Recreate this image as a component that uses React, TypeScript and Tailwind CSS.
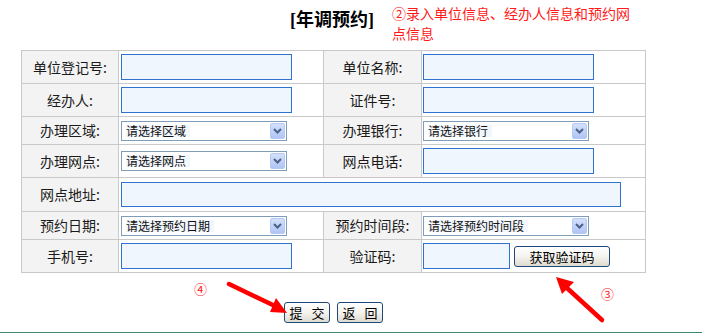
import React from "react";

const FONT = '"Noto Sans CJK SC", "Noto Sans", sans-serif';

function Label({ text }: { text: string }) {
  return (
    <div className="bg-[#f3f3f3] flex items-center justify-center text-[14px] text-[#1a1a1a]">
      {text}:
    </div>
  );
}

function Input({ w = 171, h = 26 }: { w?: number; h?: number }) {
  return (
    <div
      className="border border-[#2f72cf] bg-[#f0f6fd]"
      style={{ width: w, height: h }}
    />
  );
}

function Sel({ text }: { text: string }) {
  return (
    <div className="w-[166px] h-[20px] border border-[#7f9db9] bg-white flex items-center justify-between pl-[4px] pr-[1px]">
      <span className="text-[12px] leading-none text-[#111] bg-[#f2f7fd] pr-[4px]">{text}</span>
      <div className="w-[15px] h-[16px] rounded-[2px] border border-[#b6c9f2] bg-gradient-to-b from-[#d3e0fc] to-[#b0c5f5] flex items-center justify-center">
        <svg width="9" height="6" viewBox="0 0 9 6">
          <polyline points="1,1 4.5,4.5 8,1" fill="none" stroke="#4d6185" strokeWidth="2" />
        </svg>
      </div>
    </div>
  );
}

function XPButton({ children, w, h = 21 }: { children: React.ReactNode; w: number; h?: number }) {
  return (
    <div
      className="border border-[#1d4a7a] rounded-[3px] bg-gradient-to-b from-[#ffffff] via-[#f4f3ee] to-[#dedbd0] flex items-center justify-center text-[13px] text-black leading-none"
      style={{ width: w, height: h }}
    >
      {children}
    </div>
  );
}

function Cell({ children, pl = 2 }: { children?: React.ReactNode; pl?: number }) {
  return (
    <div className="bg-white flex items-center" style={{ paddingLeft: pl }}>
      {children}
    </div>
  );
}

export default function App() {
  return (
    <div
      className="relative w-[702px] h-[333px] bg-white border-b border-[#3b8b6b] overflow-hidden"
      style={{ fontFamily: FONT }}
    >
      {/* header */}
      <div className="h-[50px] flex items-start">
        <div className="ml-[290px] mt-[6px] text-[18px] leading-[24px] font-bold text-black">
          <span style={{ fontFamily: '"Liberation Serif", serif' }}>[</span>
          年调预约
          <span style={{ fontFamily: '"Liberation Serif", serif' }}>]</span>
        </div>
        <div className="ml-[18px] mt-[3px] w-[240px] text-[14px] leading-[20px] text-[#ff1a1a]">
          ②录入单位信息、经办人信息和预约网点信息
        </div>
      </div>

      {/* form table */}
      <div
        className="ml-[21px] w-[625px] bg-[#c9c9c9] p-px grid gap-px"
        style={{
          gridTemplateColumns: "96px 204px 97px 223px",
          gridTemplateRows: "32px 32px 27px 32px 33px 27px 32px",
        }}
      >
        <Label text="单位登记号" />
        <Cell><Input /></Cell>
        <Label text="单位名称" />
        <Cell pl={1}><Input /></Cell>

        <Label text="经办人" />
        <Cell><Input /></Cell>
        <Label text="证件号" />
        <Cell pl={1}><Input /></Cell>

        <Label text="办理区域" />
        <Cell><Sel text="请选择区域" /></Cell>
        <Label text="办理银行" />
        <Cell pl={1}><Sel text="请选择银行" /></Cell>

        <Label text="办理网点" />
        <Cell><Sel text="请选择网点" /></Cell>
        <Label text="网点电话" />
        <Cell pl={1}><Input /></Cell>

        <Label text="网点地址" />
        <div className="col-span-3 bg-white flex items-center pl-[2px]">
          <Input w={500} h={25} />
        </div>

        <Label text="预约日期" />
        <Cell><Sel text="请选择预约日期" /></Cell>
        <Label text="预约时间段" />
        <Cell pl={1}><Sel text="请选择预约时间段" /></Cell>

        <Label text="手机号" />
        <Cell><Input /></Cell>
        <Label text="验证码" />
        <Cell pl={1}>
          <Input w={87} />
          <div className="ml-[4px]">
            <XPButton w={96}>获取验证码</XPButton>
          </div>
        </Cell>
      </div>

      {/* buttons */}
      <div className="ml-[21px] w-[625px] mt-[29px] flex justify-center gap-[7px]">
        <XPButton w={46}>
          <span>提</span>
          <span className="ml-[9px]">交</span>
        </XPButton>
        <XPButton w={46}>
          <span>返</span>
          <span className="ml-[9px]">回</span>
        </XPButton>
      </div>

      {/* annotations */}
      <div className="absolute left-[194px] top-[281px] text-[13px] leading-[16px] text-[#ff1a1a]">④</div>
      <div className="absolute left-[601px] top-[286px] text-[13px] leading-[16px] text-[#ff1a1a]">③</div>
      <svg className="absolute inset-0 pointer-events-none" width="702" height="333">
        <line x1="229" y1="284" x2="275" y2="306" stroke="#ff0000" strokeWidth="4.5" strokeLinecap="round" />
        <polygon points="287,313 270,312 276,298" fill="#ff0000" />
        <line x1="602" y1="320" x2="567" y2="288" stroke="#ff0000" strokeWidth="4.5" strokeLinecap="round" />
        <polygon points="556,277 574,282 562,294" fill="#ff0000" />
      </svg>
    </div>
  );
}
